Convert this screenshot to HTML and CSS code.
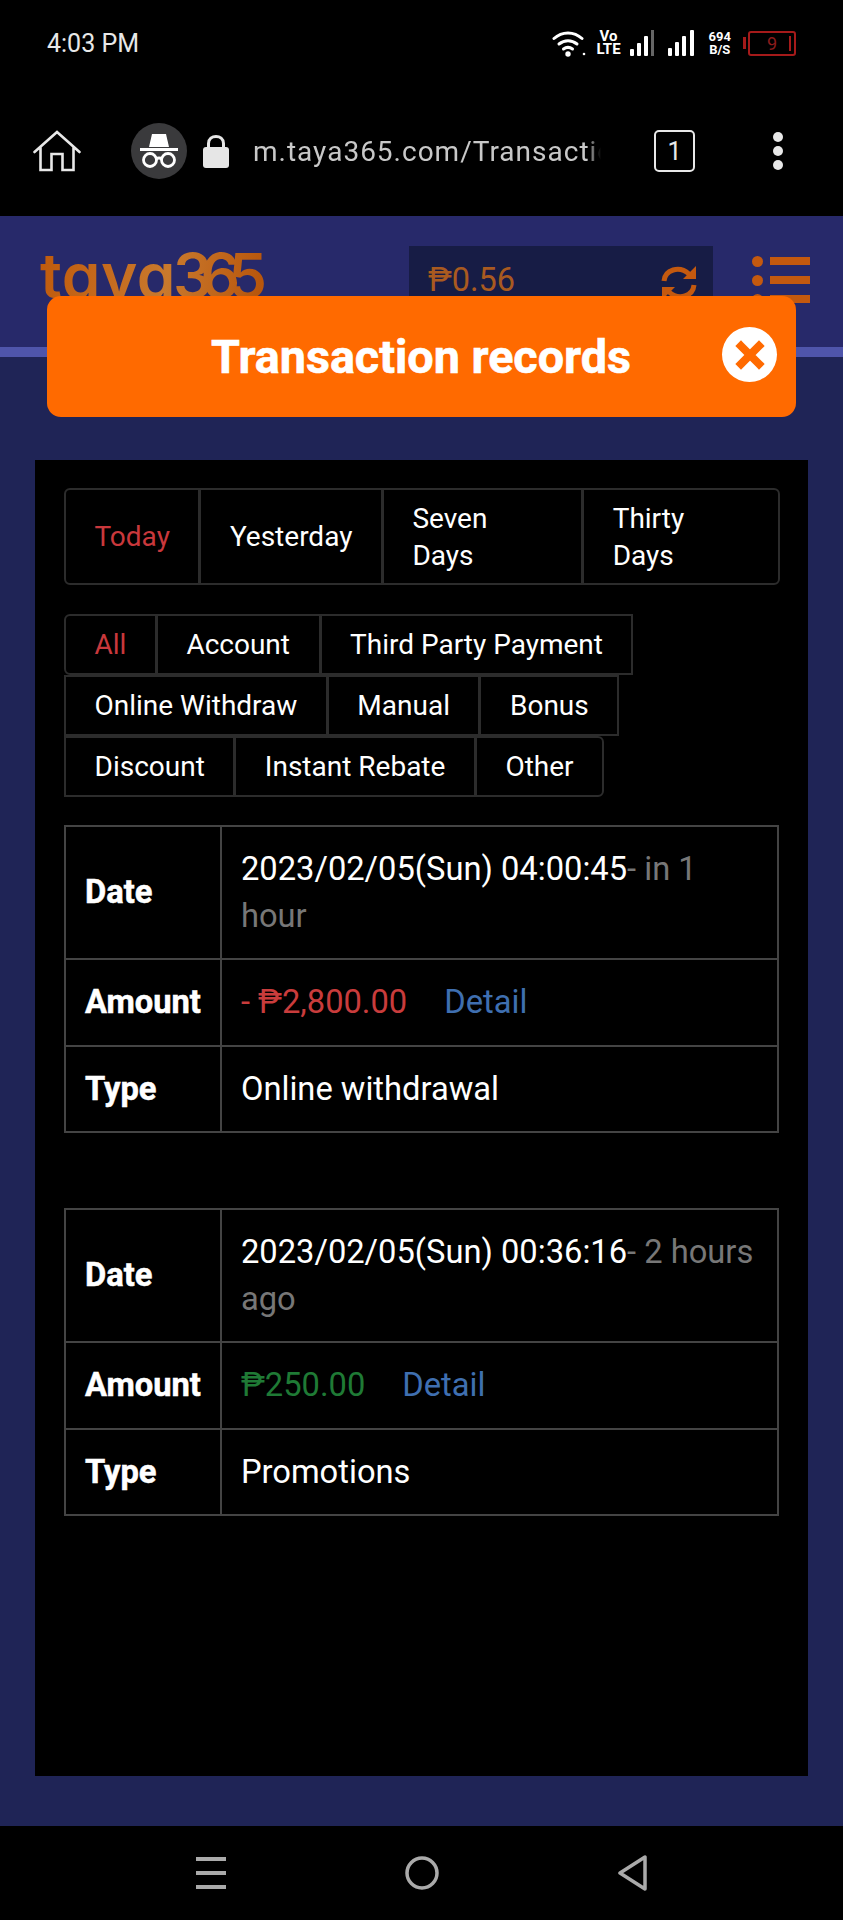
FILE: index.html
```html
<!DOCTYPE html>
<html lang="en">
<head>
<meta charset="utf-8">
<title>Transaction records</title>
<link rel="stylesheet" href="styles.css">
</head>
<body>
<div class="screen">
  <div class="status">
    <span class="clock">4:03 PM</span>
    <div class="status-icons">
      <svg class="i-wifi" width="34" height="28" viewBox="0 0 34 28"><g fill="none" stroke="#fff" stroke-width="3" stroke-linecap="round"><path d="M2 9.500C10 2 22 2 30 9.500"/><path d="M7 15C12.500 10.500 19.500 10.500 25 15"/><path d="M11.500 20C14.500 17.800 17.500 17.800 20.500 20"/></g><circle cx="16" cy="25" r="2.700" fill="#fff"/><circle cx="32" cy="25" r="1.300" fill="#fff"/></svg>
      <div class="volte"><span>Vo</span><span>LTE</span></div>
      <svg class="i-bars" width="24" height="26" viewBox="0 0 24 26"><rect x="0" y="19" width="4" height="7" rx="1" fill="#fff"/><rect x="7" y="13" width="4" height="13" rx="1" fill="#fff"/><rect x="14" y="6" width="4" height="20" rx="1" fill="#fff"/><rect x="21" y="0" width="3" height="26" fill="#666"/></svg>
      <svg class="i-bars" width="26" height="26" viewBox="0 0 26 26"><rect x="0" y="18" width="4" height="8" rx="1" fill="#fff"/><rect x="7" y="12" width="4" height="14" rx="1" fill="#fff"/><rect x="14" y="6" width="4" height="20" rx="1" fill="#fff"/><rect x="22" y="0" width="4" height="26" rx="1" fill="#fff"/></svg>
      <div class="speed"><span>694</span><span>B/S</span></div>
      <div class="battery"><span class="batt-tip"></span><span class="batt-body">9<i class="batt-mark"></i></span></div>
    </div>
  </div>

  <div class="toolbar">
    <svg class="i-home" width="48" height="42" viewBox="0 0 48 42"><path d="M1.500 22L24 2L46.500 22M7.500 17V40H18.500V24H29.500V40H40.500V17" fill="none" stroke="#e8e8e8" stroke-width="2.600" stroke-linejoin="miter" stroke-linecap="round"/></svg>
    <div class="incognito">
      <svg width="38" height="36" viewBox="0 0 38 36"><path d="M9 14L12 1H26L29 14Z" fill="#fff"/><rect x="0" y="15" width="38" height="3" fill="#fff"/><g fill="none" stroke="#fff" stroke-width="2.800"><circle cx="10" cy="27" r="6.500"/><circle cx="28" cy="27" r="6.500"/><path d="M16 26Q19 24 22 26"/></g></svg>
    </div>
    <svg class="i-lock" width="26" height="34" viewBox="0 0 26 34"><path d="M5.500 15V9.500C5.500 0 20.500 0 20.500 9.500V15" fill="none" stroke="#e6e6e6" stroke-width="3"/><rect x="0" y="13" width="26" height="21" rx="3" fill="#e6e6e6"/></svg>
    <div class="url">m.taya365.com/Transactions</div>
    <div class="tabcount">1</div>
    <div class="kebab"><i></i><i></i><i></i></div>
  </div>

  <div class="page">
    <header class="site-head">
      <div class="logo"><span>taya</span><span class="logo-num">365</span></div>
      <div class="balance">
        <span>₱0.56</span>
        <svg width="36" height="38" viewBox="0 0 36 38"><g fill="none" stroke="#c4590f" stroke-width="5"><path d="M3 17C4 6 18 1 28 10"/><path d="M33 21C32 32 18 37 8 28"/></g><path d="M35 2V15H22Z" fill="#c4590f"/><path d="M1 36V23H14Z" fill="#c4590f"/></svg>
      </div>
      <div class="list-icon">
        <div class="list-row"><i></i><b></b></div>
        <div class="list-row"><i></i><b></b></div>
        <div class="list-row"><i></i><b></b></div>
      </div>
    </header>

    <div class="modal-head">
      <h1>Transaction records</h1>
      <div class="close">
        <svg width="30" height="30" viewBox="0 0 30 30"><path d="M6 6L24 24M24 6L6 24" stroke="#ff6a00" stroke-width="8" stroke-linecap="square"/></svg>
      </div>
    </div>

    <main class="card">
      <div class="tabs">
        <a class="tab active">Today</a>
        <a class="tab">Yesterday</a>
        <a class="tab">Seven Days</a>
        <a class="tab">Thirty Days</a>
      </div>
      <div class="filters">
        <a class="tab active">All</a>
        <a class="tab">Account</a>
        <a class="tab">Third Party Payment</a>
        <a class="tab">Online Withdraw</a>
        <a class="tab">Manual</a>
        <a class="tab">Bonus</a>
        <a class="tab">Discount</a>
        <a class="tab">Instant Rebate</a>
        <a class="tab">Other</a>
      </div>

      <table class="record">
        <tr><th>Date</th><td>2023/02/05(Sun) 04:00:45<span class="muted">- in 1 hour</span></td></tr>
        <tr><th>Amount</th><td><span class="neg">- ₱2,800.00</span><a class="detail">Detail</a></td></tr>
        <tr><th>Type</th><td>Online withdrawal</td></tr>
      </table>
      <table class="record">
        <tr><th>Date</th><td>2023/02/05(Sun) 00:36:16<span class="muted">- 2 hours ago</span></td></tr>
        <tr><th>Amount</th><td><span class="pos">₱250.00</span><a class="detail">Detail</a></td></tr>
        <tr><th>Type</th><td>Promotions</td></tr>
      </table>
    </main>
  </div>

  <nav class="navbar">
    <svg width="30" height="32" viewBox="0 0 30 32"><g fill="#aaa"><rect y="0" width="30" height="4"/><rect y="14" width="30" height="4"/><rect y="28" width="30" height="4"/></g></svg>
    <svg width="34" height="34" viewBox="0 0 34 34"><circle cx="17" cy="17" r="15" fill="none" stroke="#aaa" stroke-width="3.500"/></svg>
    <svg width="30" height="36" viewBox="0 0 30 36"><path d="M27 2V34L2 18Z" fill="none" stroke="#aaa" stroke-width="3.500" stroke-linejoin="round"/></svg>
  </nav>
</div>
</body>
</html>
```
FILE: styles.css
```css
* { box-sizing: border-box; }
html, body { margin: 0; padding: 0; background: #000; }
body { font-family: Roboto, "Noto Sans", sans-serif; color: #fff; }
.screen { width: 843px; height: 1920px; display: flex; flex-direction: column; overflow: hidden; }

.status { height: 86px; flex: none; display: flex; align-items: center; justify-content: space-between; padding: 0 47px; background: #000; }
.clock { font-size: 25px; color: #e8e8e8; }
.status-icons { display: flex; align-items: center; }
.i-wifi { margin-right: 10px; }
.volte, .speed { display: flex; flex-direction: column; align-items: center; font-weight: 700; line-height: 13px; font-size: 13px; }
.volte { margin-right: 9px; font-size: 15px; }
.i-bars { margin-right: 14px; }
.speed { margin-right: 12px; margin-left: 1px; }
.battery { display: flex; align-items: center; width: 53px; flex: none; }
.batt-tip { width: 3px; height: 12px; background: #a51a1a; flex: none; }
.batt-body { position: relative; flex: 1; height: 25px; border: 2px solid #a51a1a; border-radius: 3px; margin-left: 2px; color: #8c1c1c; font-size: 18px; line-height: 21px; text-align: center; }
.batt-mark { position: absolute; right: 3px; top: 3px; width: 2px; height: 15px; background: #a51a1a; }

.toolbar { height: 130px; flex: none; display: flex; align-items: center; background: #000; padding-left: 33px; }
.incognito { width: 56px; height: 56px; border-radius: 50%; background: #3a3a3c; margin-left: 50px; display: flex; align-items: center; justify-content: center; flex: none; }
.i-home, .i-lock { flex: none; }
.i-lock { margin-left: 16px; }
.url { width: 348px; margin-left: 24px; overflow: hidden; white-space: nowrap; font-size: 28px; letter-spacing: 1px; color: #c8c8c8; -webkit-mask-image: linear-gradient(to right, #000 96%, transparent); mask-image: linear-gradient(to right, #000 96%, transparent); }
.tabcount { width: 41px; height: 42px; margin-left: 53px; border: 2.500px solid #e8e8e8; border-radius: 5px; display: flex; align-items: center; justify-content: center; font-size: 25px; color: #e8e8e8; flex: none; }
.kebab { margin-left: 78px; display: flex; flex-direction: column; gap: 4px; flex: none; }
.kebab i { display: block; width: 10px; height: 10px; border-radius: 50%; background: #e8e8e8; }

.page { flex: 1; position: relative; background: #1f2456; display: flex; flex-direction: column; }
.site-head { height: 141px; flex: none; display: flex; align-items: flex-start; padding: 30px 33px 0 40px; background: #27296a; border-bottom: 10px solid #4f55ab; }
.logo { flex: 1; font-family: Inter, sans-serif; font-feature-settings: "cv11"; font-size: 62px; line-height: 60px; font-weight: 600; letter-spacing: 0.5px; color: #b5570f; background: linear-gradient(100deg, #c05a0c, #c9792d 35%, #b8560c 60%, #cf7e2c 85%, #b8560c); -webkit-background-clip: text; background-clip: text; -webkit-text-fill-color: transparent; }
.logo-num { letter-spacing: -12px; margin-left: -3px; }
.balance { width: 304px; height: 74px; background: #171c45; margin-right: 39px; padding: 15px 16px 0 19px; display: flex; justify-content: space-between; align-items: flex-start; font-size: 32.500px; line-height: 38px; color: #a95a20; }
.balance svg { margin-top: 3px; }
.list-icon { width: 58px; display: flex; flex-direction: column; gap: 9px; margin-top: 10px; flex: none; }
.list-row { display: flex; align-items: center; justify-content: space-between; height: 10px; }
.list-row i { width: 11px; height: 11px; border-radius: 50%; background: #c4590f; }
.list-row b { width: 40px; height: 8px; background: #c4590f; }

.modal-head { position: absolute; left: 47px; top: 80px; width: 749px; height: 121px; background: #ff6a00; border-radius: 14px; display: flex; align-items: center; justify-content: center; }
.modal-head h1 { margin: 0 0 0 -1px; font-size: 46.700px; font-weight: 700; color: #fff; -webkit-text-stroke: 0.6px #fff; }
.close { position: absolute; right: 19px; top: 31px; width: 55px; height: 55px; border-radius: 50%; background: #fff; display: flex; align-items: center; justify-content: center; }

.card { margin: 103px 35px 0; height: 1316px; background: #000; padding: 28px 29px; font-size: 28px; }
.tabs, .filters { display: flex; }
.filters { flex-wrap: wrap; margin-top: 29px; }
.tab { padding: 10px 28.500px; line-height: 37px; border: 2px solid #2c2c2c; color: #fff; margin-right: -1px; margin-bottom: 0; }
.tabs .tab { display: flex; align-items: center; padding-top: 9.500px; padding-bottom: 9.500px; }
.tab.active { color: #c9383c; }
.tabs .tab:first-child, .filters .tab:first-child { border-radius: 6px 0 0 6px; }
.tabs .tab:last-child, .filters .tab:last-child { border-radius: 0 6px 6px 0; }

.record { width: 100%; border-collapse: collapse; margin-top: 28px; margin-bottom: 75px; line-height: 46.500px; font-size: 32.700px; }
.record th, .record td { border: 2px solid #444; padding: 19px; text-align: left; vertical-align: middle; }
.record th { width: 153.500px; font-weight: 700; -webkit-text-stroke: 0.5px #fff; }
.muted { color: #777; }
.neg { color: #c93c3c; }
.pos { color: #1f7a35; }
.detail { color: #3f6fb0; margin-left: 37px; }

.navbar { height: 94px; flex: none; background: #000; display: flex; align-items: center; padding-left: 196px; gap: 179px; }
```
